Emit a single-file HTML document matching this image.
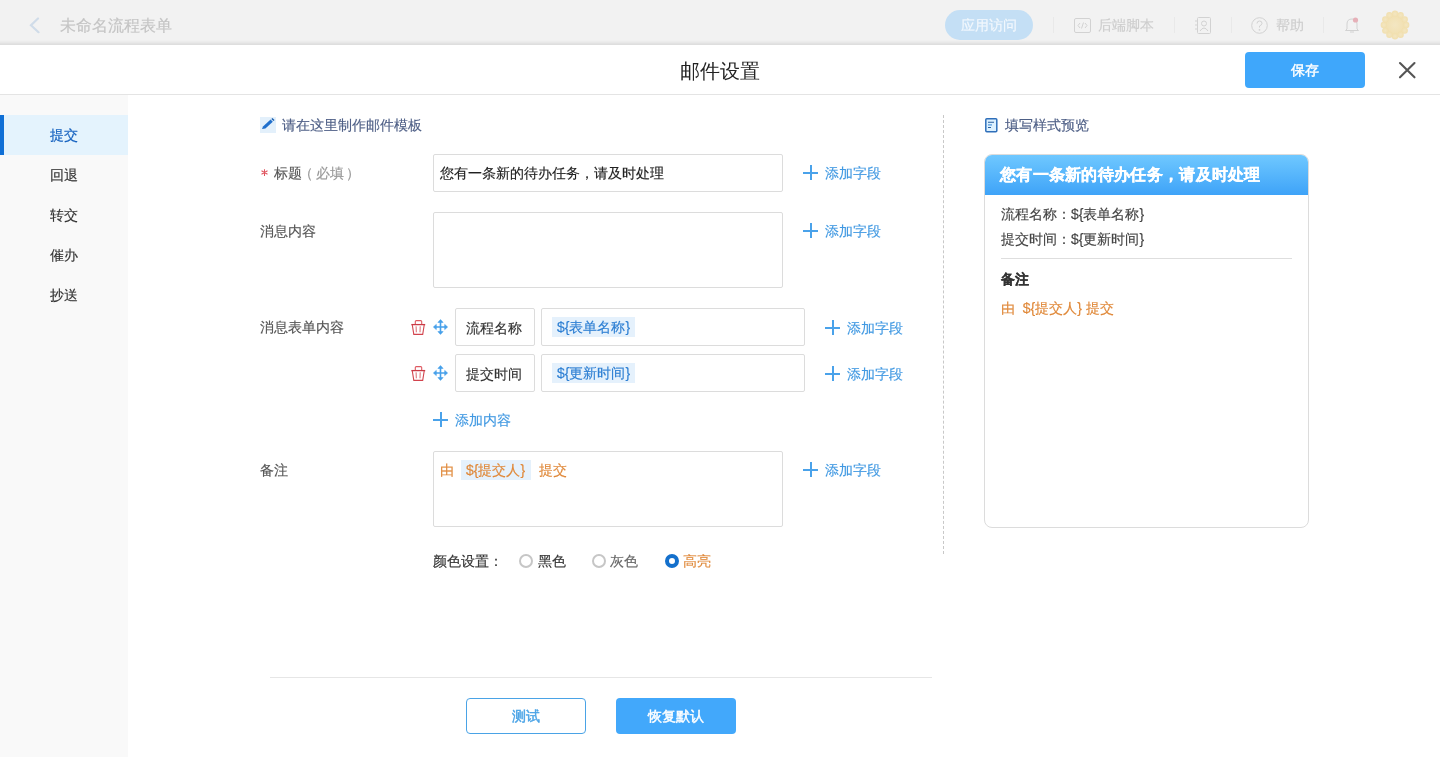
<!DOCTYPE html>
<html><head><meta charset="utf-8">
<style>
*{box-sizing:border-box;margin:0;padding:0}
body{-webkit-font-smoothing:antialiased;will-change:transform}
.a,.lbl,.add,.item,.tag,.btn{-webkit-text-stroke:.15px currentColor}
html,body{width:1440px;height:757px;overflow:hidden;background:#fff;font-family:"Liberation Sans",sans-serif;font-size:14px;color:#333}
.a{position:absolute;white-space:nowrap}
.topbar{position:absolute;left:0;top:0;width:1440px;height:45px;background:linear-gradient(#f2f2f2 0,#f2f2f2 40px,#e6e6e6 43px,#dedede 44px,#dedede 45px)}
.hdr{position:absolute;left:0;top:45px;width:1440px;height:50px;background:#fff;border-bottom:1px solid #e4e4e4}
.side{position:absolute;left:0;top:95px;width:128px;height:662px;background:#f9f9f9}
.item{position:absolute;left:0;width:128px;height:40px;line-height:40px;padding-left:50px;color:#333}
.item.on{background:#e4f3fd;color:#1763c0;-webkit-text-stroke:.2px #1763c0}
.item.on:before{content:"";position:absolute;left:0;top:0;width:4px;height:40px;background:#0f6fd6}
.lbl{position:absolute;color:#555;line-height:20px}
.box{position:absolute;border:1px solid #dcdcdc;border-radius:2px;background:#fff}
.add{position:absolute;color:#4199e2;line-height:20px}
.plus{position:absolute;width:15px;height:15px}
.plus:before{content:"";position:absolute;left:0;top:6.5px;width:15px;height:2px;background:#4aa2ea}
.plus:after{content:"";position:absolute;left:6.5px;top:0;width:2px;height:15px;background:#4aa2ea}
.tag{position:absolute;background:#e5f1fc;color:#2d7fd3;line-height:20px;height:20px}
.radio{position:absolute;width:14px;height:14px;border-radius:50%;border:2px solid #c6c6c6;background:#fff}
.radio.on{border:4px solid #1470cc}
.btn{position:absolute;height:36px;width:120px;border-radius:4px;text-align:center;line-height:36px;font-weight:normal;-webkit-text-stroke:.45px currentColor!important}
</style></head><body>

<!-- top bar (under mask) -->
<div class="topbar">
  <svg class="a" style="left:27px;top:17px" width="14" height="18" viewBox="0 0 14 18"><path d="M11 1.5 L4 8.3 L11.5 15.2" fill="none" stroke="#d0dce9" stroke-width="2.2" stroke-linecap="round"/></svg>
  <div class="a" style="left:60px;top:16px;font-size:16px;line-height:20px;color:#c4c4c4">未命名流程表单</div>
  <div class="a" style="left:945px;top:10px;width:88px;height:30px;border-radius:15px;background:#c4dff5;color:#f3f8fd;text-align:center;line-height:30px">应用访问</div>
  <div class="a" style="left:1053px;top:17px;width:1px;height:16px;background:#e9e9e9"></div>
  <svg class="a" style="left:1074px;top:18px" width="17" height="15" viewBox="0 0 17 15"><rect x="0.5" y="0.5" width="16" height="14" rx="1.5" fill="none" stroke="#d2d2d2"/><path d="M6 5 L4 7.5 L6 10 M11 5 L13 7.5 L11 10 M9.5 4.5 L7.5 10.5" fill="none" stroke="#d2d2d2"/></svg>
  <div class="a" style="left:1098px;top:15px;line-height:20px;color:#cdcdcd">后端脚本</div>
  <div class="a" style="left:1174px;top:17px;width:1px;height:16px;background:#e9e9e9"></div>
  <svg class="a" style="left:1195px;top:17px" width="17" height="17" viewBox="0 0 17 17"><rect x="2.5" y="0.5" width="13" height="16" rx="1" fill="none" stroke="#d2d2d2"/><circle cx="9" cy="6.5" r="2.5" fill="none" stroke="#d2d2d2"/><path d="M5 14 Q9 8 13 14" fill="none" stroke="#d2d2d2"/><path d="M0 4h3M0 8h3M0 12h3" stroke="#d2d2d2"/></svg>
  <div class="a" style="left:1231px;top:17px;width:1px;height:16px;background:#e9e9e9"></div>
  <svg class="a" style="left:1251px;top:17px" width="17" height="17" viewBox="0 0 17 17"><circle cx="8.5" cy="8.5" r="7.8" fill="none" stroke="#d2d2d2"/><path d="M6 6.5 Q6 4 8.5 4 Q11 4 11 6.3 Q11 8 8.5 9 L8.5 10.5" fill="none" stroke="#d2d2d2"/><circle cx="8.5" cy="12.8" r="0.9" fill="#d2d2d2"/></svg>
  <div class="a" style="left:1276px;top:15px;line-height:20px;color:#cdcdcd">帮助</div>
  <div class="a" style="left:1323px;top:17px;width:1px;height:16px;background:#e9e9e9"></div>
  <svg class="a" style="left:1344px;top:16px" width="16" height="18" viewBox="0 0 16 18"><path d="M3 13 L3 8 Q3 3 8 3 Q13 3 13 8 L13 13 L14.5 14.5 L1.5 14.5 Z M6 16 L10 16" fill="none" stroke="#d2d2d2"/><circle cx="11.5" cy="4" r="2.6" fill="#e6b0b8"/></svg>
  <svg class="a" style="left:1380px;top:10px" width="30" height="30" viewBox="0 0 30 30"><defs><radialGradient id="av"><stop offset="0" stop-color="#f3e6c2"/><stop offset="1" stop-color="#f1dfae"/></radialGradient></defs><g fill="url(#av)"><circle cx="15" cy="15" r="11.5"/><circle cx="15" cy="3.8" r="3.2"/><circle cx="20.6" cy="5.3" r="3.2"/><circle cx="24.7" cy="9.4" r="3.2"/><circle cx="26.2" cy="15" r="3.2"/><circle cx="24.7" cy="20.6" r="3.2"/><circle cx="20.6" cy="24.7" r="3.2"/><circle cx="15" cy="26.2" r="3.2"/><circle cx="9.4" cy="24.7" r="3.2"/><circle cx="5.3" cy="20.6" r="3.2"/><circle cx="3.8" cy="15" r="3.2"/><circle cx="5.3" cy="9.4" r="3.2"/><circle cx="9.4" cy="5.3" r="3.2"/></g></svg>
</div>

<!-- modal header -->
<div class="hdr">
  <div class="a" style="left:680px;top:13px;font-size:20px;line-height:26px;color:#222;-webkit-text-stroke:0">邮件设置</div>
  <div class="btn" style="left:1245px;top:7px;background:#3fa7fb;color:#fff">保存</div>
  <svg class="a" style="left:1398px;top:16px" width="19" height="19" viewBox="0 0 19 19"><path d="M2 2 L16.5 16.3 M16.5 2 L2 16.3" stroke="#555" stroke-width="2.1" stroke-linecap="round"/></svg>
</div>

<!-- sidebar -->
<div class="side">
  <div class="item on" style="top:20px">提交</div>
  <div class="item" style="top:60px">回退</div>
  <div class="item" style="top:100px">转交</div>
  <div class="item" style="top:140px">催办</div>
  <div class="item" style="top:180px">抄送</div>
</div>

<!-- form -->
<div class="a" style="left:260px;top:117px;width:16px;height:16px;background:#e3f0fb"></div>
<svg class="a" style="left:260px;top:117px" width="16" height="16" viewBox="0 0 16 16"><path d="M2 12 L3 9.6 L10.6 2.6 L12.8 4.8 L5.4 11.6 Z" fill="#1f6fcc"/><path d="M11.3 1.9 L12.4 0.9 L14.6 3.1 L13.5 4.1 Z" fill="#1b5fae"/></svg>
<div class="a" style="left:282px;top:115px;line-height:20px;color:#4e5f86">请在这里制作邮件模板</div>

<svg class="a" style="left:260px;top:168px" width="9" height="9" viewBox="0 0 9 9"><path d="M4.5 1.2 V8 M1.5 2.8 L7.5 6.3 M7.5 2.8 L1.5 6.3" stroke="#e0545e" stroke-width="1.05"/></svg>
<div class="lbl" style="left:274px;top:163px">标题</div>
<div class="lbl" style="left:299px;top:163px;color:#999">（</div>
<div class="lbl" style="left:316px;top:163px;color:#999">必填</div>
<div class="lbl" style="left:346px;top:163px;color:#999">）</div>
<div class="box" style="left:433px;top:154px;width:350px;height:38px"></div>
<div class="a" style="left:440px;top:163px;line-height:20px;color:#222">您有一条新的待办任务，请及时处理</div>
<div class="plus" style="left:803px;top:165px"></div>
<div class="add" style="left:825px;top:163px">添加字段</div>

<div class="lbl" style="left:260px;top:221px">消息内容</div>
<div class="box" style="left:433px;top:212px;width:350px;height:76px"></div>
<div class="plus" style="left:803px;top:223px"></div>
<div class="add" style="left:825px;top:221px">添加字段</div>

<div class="lbl" style="left:260px;top:317px">消息表单内容</div>

<svg class="a trash" style="left:411px;top:320px" width="15" height="16" viewBox="0 0 15 16"><path d="M4.3 4.6 V1.6 Q4.3 0.6 5.3 0.6 H9.7 Q10.7 0.6 10.7 1.6 V4.6" fill="none" stroke="#de5a62" stroke-width="1.1"/><path d="M0.3 4.6 H14.2" stroke="#c93a45" stroke-width="1.3"/><path d="M1.3 5 L2.8 14.4 H11.7 L13.2 5" fill="none" stroke="#d2434d" stroke-width="1.1"/><path d="M5.1 6.3 L5.3 12.3 M9.2 6.3 L9 12.3" stroke="#dc6a70" stroke-width="1"/></svg>
<svg class="a mv" style="left:433px;top:319px" width="16" height="16" viewBox="0 0 16 16"><path d="M7.5 2 V14 M1.5 8 H13.5" stroke="#46a0ea" stroke-width="1.6"/><path d="M7.5 0.6 L10.1 3.4 H4.9 Z M7.5 15.4 L10.1 12.6 H4.9 Z M0.4 8 L3.3 5.4 V10.6 Z M14.6 8 L11.7 5.4 V10.6 Z" fill="#46a0ea" stroke="#46a0ea" stroke-width=".6" stroke-linejoin="round"/></svg>
<div class="box" style="left:455px;top:308px;width:80px;height:38px"></div>
<div class="a" style="left:466px;top:318px;line-height:20px;color:#333">流程名称</div>
<div class="box" style="left:541px;top:308px;width:264px;height:38px"></div>
<div class="tag" style="left:552px;top:317px;width:83px;padding-left:5px">${表单名称}</div>
<div class="plus" style="left:825px;top:320px"></div>
<div class="add" style="left:847px;top:318px">添加字段</div>

<svg class="a trash" style="left:411px;top:366px" width="15" height="16" viewBox="0 0 15 16"><path d="M4.3 4.6 V1.6 Q4.3 0.6 5.3 0.6 H9.7 Q10.7 0.6 10.7 1.6 V4.6" fill="none" stroke="#de5a62" stroke-width="1.1"/><path d="M0.3 4.6 H14.2" stroke="#c93a45" stroke-width="1.3"/><path d="M1.3 5 L2.8 14.4 H11.7 L13.2 5" fill="none" stroke="#d2434d" stroke-width="1.1"/><path d="M5.1 6.3 L5.3 12.3 M9.2 6.3 L9 12.3" stroke="#dc6a70" stroke-width="1"/></svg>
<svg class="a mv" style="left:433px;top:365px" width="16" height="16" viewBox="0 0 16 16"><path d="M7.5 2 V14 M1.5 8 H13.5" stroke="#46a0ea" stroke-width="1.6"/><path d="M7.5 0.6 L10.1 3.4 H4.9 Z M7.5 15.4 L10.1 12.6 H4.9 Z M0.4 8 L3.3 5.4 V10.6 Z M14.6 8 L11.7 5.4 V10.6 Z" fill="#46a0ea" stroke="#46a0ea" stroke-width=".6" stroke-linejoin="round"/></svg>
<div class="box" style="left:455px;top:354px;width:80px;height:38px"></div>
<div class="a" style="left:466px;top:364px;line-height:20px;color:#333">提交时间</div>
<div class="box" style="left:541px;top:354px;width:264px;height:38px"></div>
<div class="tag" style="left:552px;top:363px;width:83px;padding-left:5px">${更新时间}</div>
<div class="plus" style="left:825px;top:366px"></div>
<div class="add" style="left:847px;top:364px">添加字段</div>

<div class="plus" style="left:433px;top:412px"></div>
<div class="add" style="left:455px;top:410px">添加内容</div>

<div class="lbl" style="left:260px;top:460px">备注</div>
<div class="box" style="left:433px;top:451px;width:350px;height:76px"></div>
<div class="a" style="left:440px;top:460px;line-height:20px;color:#e0893a">由</div>
<div class="tag" style="left:461px;top:460px;width:70px;padding-left:5px;color:#e0893a">${提交人}</div>
<div class="a" style="left:539px;top:460px;line-height:20px;color:#e0893a">提交</div>
<div class="plus" style="left:803px;top:462px"></div>
<div class="add" style="left:825px;top:460px">添加字段</div>

<div class="a" style="left:433px;top:551px;line-height:20px;color:#333">颜色设置：</div>
<div class="radio" style="left:519px;top:554px"></div>
<div class="a" style="left:538px;top:551px;line-height:20px;color:#333">黑色</div>
<div class="radio" style="left:592px;top:554px"></div>
<div class="a" style="left:610px;top:551px;line-height:20px;color:#666">灰色</div>
<div class="radio on" style="left:665px;top:554px"></div>
<div class="a" style="left:683px;top:551px;line-height:20px;color:#e0893a">高亮</div>

<div class="a" style="left:943px;top:115px;width:1px;height:439px;border-left:1px dashed #c8c8c8"></div>

<!-- preview -->
<svg class="a" style="left:985px;top:118px" width="13" height="15" viewBox="0 0 13 15"><rect x="0.8" y="0.8" width="11" height="13" rx="1" fill="#dcf1ff" stroke="#2f6fba" stroke-width="1.5"/><path d="M3 4.3 H9 M3 9.5 H6" stroke="#2a5f9e" stroke-width="1.1"/><path d="M3 6.9 H7" stroke="#5b9ee0" stroke-width="1.3"/></svg>
<div class="a" style="left:1005px;top:115px;line-height:20px;color:#4e5f86">填写样式预览</div>
<div class="a" style="left:984px;top:154px;width:325px;height:374px;border:1px solid #dcdcdc;border-radius:8px;overflow:hidden">
  <div style="height:40px;background:linear-gradient(#6fc8ff,#3ea3f8);color:#fff;font-weight:bold;font-size:16px;line-height:40px;padding-left:15px;letter-spacing:.3px;-webkit-text-stroke:.3px #fff">您有一条新的待办任务，请及时处理</div>
</div>
<div class="a" style="left:1001px;top:204px;line-height:20px;color:#444">流程名称：${表单名称}</div>
<div class="a" style="left:1001px;top:229px;line-height:20px;color:#444">提交时间：${更新时间}</div>
<div class="a" style="left:1001px;top:258px;width:291px;height:1px;background:#dedede"></div>
<div class="a" style="left:1001px;top:269px;line-height:20px;color:#333;font-weight:bold">备注</div>
<div class="a" style="left:1001px;top:298px;line-height:20px;color:#e0893a">由&nbsp; ${提交人} 提交</div>

<!-- footer -->
<div class="a" style="left:270px;top:677px;width:662px;height:1px;background:#e6e6e6"></div>
<div class="btn" style="left:466px;top:698px;border:1px solid #4aa3e6;color:#4aa3e6;background:#fff;line-height:34px">测试</div>
<div class="btn" style="left:616px;top:698px;background:#42a8fb;color:#fff">恢复默认</div>

</body></html>
